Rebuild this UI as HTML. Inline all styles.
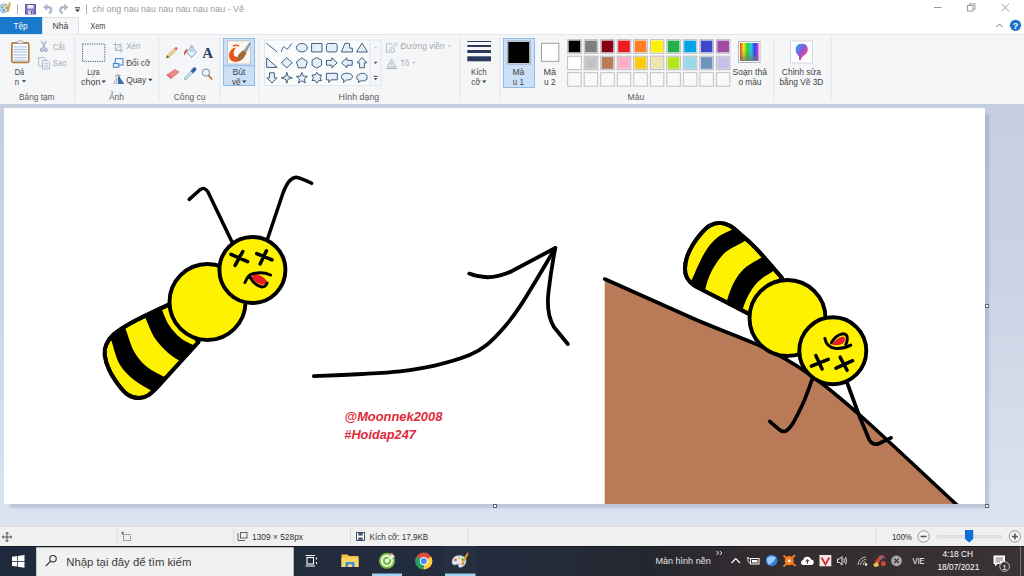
<!DOCTYPE html>
<html lang="vi">
<head>
<meta charset="utf-8">
<title>chi ong nau nau nau nau nau nau - Vẽ</title>
<style>
html,body{margin:0;padding:0;}
body{width:1024px;height:576px;overflow:hidden;position:relative;background:#fff;font-family:"Liberation Sans",sans-serif;font-size:9px;color:#3c3c3c;}
.abs{position:absolute;}
#titlebar{left:0;top:0;width:1024px;height:17px;background:#fff;}
#tabs{left:0;top:17px;width:1024px;height:17px;background:#fff;}
#ribbon{left:0;top:34px;width:1024px;height:70px;background:#f5f6f7;border-top:1px solid #e4e6e9;box-sizing:border-box;}
#work{left:0;top:104px;width:1024px;height:422px;background:linear-gradient(#c5cfdf,#c9d3e3 40%,#dce4f1);}
#canvas{left:4px;top:108px;width:981px;height:396px;background:#fff;box-shadow:5px 5px 2px -1px rgba(120,132,165,.3);}
#status{left:0;top:526px;width:1024px;height:20px;background:#f0f0f0;border-top:1px solid #dadbdc;box-sizing:border-box;}
#taskbar{left:0;top:546px;width:1024px;height:30px;background:linear-gradient(90deg,#1e2a3c 0,#242d3d 50%,#24272f 63%,#322c30 73%,#3a3233 100%);}
</style>
</head>
<body>
<div id="titlebar" class="abs"></div>
<div id="tabs" class="abs"></div>
<div id="ribbon" class="abs"></div>
<div id="work" class="abs"></div>
<div id="canvas" class="abs"></div>
<div id="status" class="abs"></div>
<div id="taskbar" class="abs"></div>
<svg id="ui" class="abs" style="left:0;top:0" width="1024" height="576" viewBox="0 0 1024 576" font-family="'Liberation Sans',sans-serif">
<g transform="translate(-1.5,-.5)"><path d="M1,9 Q1,4.5 6,4.5 Q10.5,5 10,9 Q9.5,12.5 6,13 Q1.5,13.5 1,9 Z" fill="#c4dcee" stroke="#7d9fc0" stroke-width=".8"/><circle cx="3.5" cy="8" r="1" fill="#5bb85b"/><circle cx="6" cy="6.5" r="1" fill="#f3c21b"/><circle cx="8.3" cy="8.5" r="1" fill="#47a447"/><circle cx="5" cy="10.8" r="1" fill="#3c7fd0"/><path d="M8.3,12 L10.5,2.8 L12.3,3.2 L10.3,12.5 Z" fill="#eaa13c"/></g>
<rect x="17" y="4.5" width="1" height="9.5" fill="#a9a9a9"/>
<g><rect x="25.5" y="4.5" width="10" height="9.5" fill="#8777bf" stroke="#6656a4" stroke-width="1"/><rect x="27.5" y="5" width="6" height="3.5" fill="#efeaf8"/><rect x="28" y="10.5" width="5" height="3.5" fill="#d8d0ea"/><rect x="31" y="11" width="1.4" height="2.5" fill="#4d3d84"/></g>
<g fill="#a9b6cb"><path d="M43,7.2 L47.3,3.7 V10.7 Z"/><path d="M47,7.2 H48.3 Q51.2,7.2 51.2,10 Q51.2,12.3 48.8,13.3" fill="none" stroke="#a9b6cb" stroke-width="2.3"/></g>
<g fill="#a9b6cb"><path d="M68.5,7.2 L64.2,3.7 V10.7 Z"/><path d="M64.5,7.2 H63.2 Q60.3,7.2 60.3,10 Q60.3,12.3 62.7,13.3" fill="none" stroke="#a9b6cb" stroke-width="2.3"/></g>
<rect x="75" y="7.3" width="5" height="1" fill="#333"/>
<path d="M75,9.5 h5 l-2.5,2.6 z" fill="#333"/>
<rect x="86" y="4.5" width="1" height="9.5" fill="#a9a9a9"/>
<text x="92.6" y="12.1" textLength="151.4" lengthAdjust="spacingAndGlyphs" font-size="8.9" fill="#9b9b9b">chi ong nau nau nau nau nau nau - Vẽ</text>
<g fill="none" stroke="#9a9a9a" stroke-width="1"><path d="M934,7.5 H941.5"/><rect x="967.5" y="5.5" width="5.5" height="5.5"/><path d="M969.5,5.5 V3.8 H975 V9.3 H973"/><path d="M1001.5,3.8 L1009,11.3 M1009,3.8 L1001.5,11.3"/></g>
<rect x="0" y="17" width="42" height="17" fill="#1979ca"/>
<text x="13.5" y="28.7" textLength="14" lengthAdjust="spacingAndGlyphs" font-size="8.9" fill="#fff">Tệp</text>
<path d="M42.5,34.5 V17.5 H78.5 V34.5" fill="#f5f6f7" stroke="#dcdfe3" stroke-width="1"/>
<text x="52.5" y="28.7" textLength="15.8" lengthAdjust="spacingAndGlyphs" font-size="8.9" fill="#3a3a3a">Nhà</text>
<text x="90.3" y="28.7" textLength="15" lengthAdjust="spacingAndGlyphs" font-size="8.9" fill="#3a3a3a">Xem</text>
<path d="M996.5,27 L999.5,24 L1002.5,27" fill="none" stroke="#7a7a7a" stroke-width="1"/>
<circle cx="1015.5" cy="25.3" r="5.6" fill="#1f74c9"/>
<text x="1015.5" y="28.5" font-size="9" font-weight="bold" fill="#fff" text-anchor="middle">?</text>
<rect x="74.2" y="37" width="1" height="64.5" fill="#e5e7ea"/>
<rect x="158.6" y="37" width="1" height="64.5" fill="#e5e7ea"/>
<rect x="219.3" y="37" width="1" height="64.5" fill="#e5e7ea"/>
<rect x="258.5" y="37" width="1" height="64.5" fill="#e5e7ea"/>
<rect x="459.8" y="37" width="1" height="64.5" fill="#e5e7ea"/>
<rect x="499.3" y="37" width="1" height="64.5" fill="#e5e7ea"/>
<rect x="773.2" y="37" width="1" height="64.5" fill="#e5e7ea"/>
<rect x="830.8" y="37" width="1" height="64.5" fill="#e5e7ea"/>
<text x="19" y="99.8" textLength="35.5" lengthAdjust="spacingAndGlyphs" font-size="8.6" fill="#5c5c5c">Bảng tạm</text>
<text x="109" y="99.8" textLength="15" lengthAdjust="spacingAndGlyphs" font-size="8.6" fill="#5c5c5c">Ảnh</text>
<text x="173.7" y="99.8" textLength="31.9" lengthAdjust="spacingAndGlyphs" font-size="8.6" fill="#5c5c5c">Công cụ</text>
<text x="338.5" y="99.8" textLength="40.8" lengthAdjust="spacingAndGlyphs" font-size="8.6" fill="#5c5c5c">Hình dạng</text>
<text x="627.6" y="99.8" textLength="16.6" lengthAdjust="spacingAndGlyphs" font-size="8.6" fill="#5c5c5c">Màu</text>
<g><rect x="11.8" y="42.8" width="17" height="19.6" rx="1.5" fill="#fdfdfd" stroke="#b17b42" stroke-width="1.7"/><path d="M13.5,46.8 H27 M13.5,49.5 H27 M13.5,52.2 H27 M13.5,54.9 H27 M13.5,57.6 H27 M13.5,60.2 H27" stroke="#b4cbe8" stroke-width="1.3"/><path d="M17,43.6 Q17,40.5 20.3,40.5 Q23.6,40.5 23.6,43.6 Z" fill="#e9ebee" stroke="#8d949d" stroke-width=".7"/></g>
<text x="14.7" y="74.8" textLength="9.5" lengthAdjust="spacingAndGlyphs" font-size="8.6" fill="#444">Dá</text>
<text x="14.7" y="84.6" textLength="4.3" lengthAdjust="spacingAndGlyphs" font-size="8.6" fill="#444">n</text>
<path d="M21.9,80.2 h4.2 l-2.1,2.4 z" fill="#333"/>
<g stroke="#9fb0c6" stroke-width="1.3" fill="none"><path d="M41.3,41 L45.5,48.8 M46.2,41 L42,48.8"/><circle cx="41.7" cy="50" r="1.4"/><circle cx="45.8" cy="50" r="1.4"/></g>
<text x="52.8" y="49.6" textLength="12" lengthAdjust="spacingAndGlyphs" font-size="8.6" fill="#a7abb2">Cắt</text>
<g fill="#eef2f7" stroke="#a9b7ca" stroke-width=".9"><path d="M38.5,57.5 H44 L46,59.5 V66 H38.5 Z"/><path d="M42.5,60.5 H47.5 L49.5,62.5 V69 H42.5 Z"/><path d="M44,63.5 H48 M44,65.3 H48 M44,67 H48" stroke-width=".6"/></g>
<text x="52.8" y="65.7" textLength="13.6" lengthAdjust="spacingAndGlyphs" font-size="8.6" fill="#a7abb2">Sao</text>
<rect x="82.6" y="44" width="22.2" height="17.4" fill="none" stroke="#4a5a70" stroke-width="1" stroke-dasharray="1.2 1.1"/>
<text x="87.2" y="74.9" textLength="12.5" lengthAdjust="spacingAndGlyphs" font-size="8.6" fill="#444">Lựa</text>
<text x="80.9" y="84.5" textLength="19.6" lengthAdjust="spacingAndGlyphs" font-size="8.6" fill="#444">chọn</text>
<path d="M101.7,80.6 h4.2 l-2.1,2.4 z" fill="#333"/>
<g stroke="#a9b7ca" stroke-width="1" fill="none"><path d="M113.5,44.5 H121 V52.5 M115.5,42.5 V50.5 H123"/><path d="M116,50 L120.5,45"/></g>
<text x="126.2" y="49.1" textLength="14.2" lengthAdjust="spacingAndGlyphs" font-size="8.6" fill="#a7abb2">Xén</text>
<g stroke="#4384c8" stroke-width="1" fill="#f2f7fd"><rect x="115.3" y="58.7" width="7.7" height="6.3"/><rect x="113.4" y="63.5" width="5.4" height="3.8" fill="#dfeaf8"/></g>
<text x="126.2" y="65.7" textLength="24.1" lengthAdjust="spacingAndGlyphs" font-size="8.6" fill="#444">Đổi cỡ</text>
<g><path d="M118.5,83.5 V76 L123.5,83.5 Z" fill="#3272ad" stroke="#285d90" stroke-width=".8"/><path d="M117,83.5 V77.5 L113.5,83.5 Z" fill="#dfe6ef" stroke="#9aa8bb" stroke-width=".7"/><path d="M115,76.5 Q117.5,74 120.5,75.5" fill="none" stroke="#5c6b80" stroke-width=".8"/></g>
<text x="126.2" y="82.6" textLength="20" lengthAdjust="spacingAndGlyphs" font-size="8.6" fill="#444">Quay</text>
<path d="M148.3,78.8 h4.2 l-2.1,2.4 z" fill="#333"/>
<g><path d="M166.3,58.2 L167.3,55.2 L174.3,48.3 L176.3,50.3 L169.3,57.2 Z" fill="#edcf8c" stroke="#c09a55" stroke-width=".5"/><path d="M174.3,48.3 L175.4,47.3 Q176.5,46.8 177.2,47.6 Q177.9,48.5 177.3,49.4 L176.3,50.3 Z" fill="#e0707a"/><path d="M166.3,58.2 L167.3,55.2 L169.3,57.2 Z" fill="#6a5a4a"/></g>
<g><path d="M186.5,52 L191.5,47 L196.5,52 L191.5,57.5 Z" fill="#eaf2fb" stroke="#6f8fb5" stroke-width=".9"/><path d="M188,52 L191.5,48.5 L195,52 Z" fill="#b9d4ef"/><path d="M187.5,48.5 Q183.5,50.5 184,55.5 Q185.8,53.5 186.5,52 Z" fill="#e0483e"/><path d="M190,46.3 Q192.5,44.8 193.5,47.5" fill="none" stroke="#6f8fb5" stroke-width=".8"/></g>
<text x="207.7" y="58.3" font-family="'Liberation Serif',serif" font-weight="bold" font-size="15" fill="#2c3e66" text-anchor="middle">A</text>
<g><path d="M166.8,75 L175,69.5 L179,72 L171,78.8 Z" fill="#f08a8f" stroke="#cf5e66" stroke-width=".6"/><path d="M166.8,75 L171,78.8 L171,76.8 L167,73.5 Z" fill="#d9646c"/></g>
<g><path d="M184.5,79.5 L185.3,77 L191,71.2 L192.8,73 L187,78.8 Z" fill="#cfe0f2" stroke="#6f8fb5" stroke-width=".6"/><path d="M190.5,70.8 L193.5,67.6 Q195,66.8 196,67.9 Q196.8,69 196,70.2 L193.2,73.5 Z" fill="#2d64a8"/></g>
<g><circle cx="205.9" cy="72.6" r="3.5" fill="#eef5fb" stroke="#8e9db1" stroke-width="1.1"/><path d="M208.7,75.6 L211.7,79" stroke="#b07a4a" stroke-width="1.8" stroke-linecap="round"/></g>
<rect x="223.5" y="38.5" width="31" height="47" fill="#cbe0f6" stroke="#8fbce8" stroke-width="1"/>
<rect x="224" y="65.2" width="30" height="1" fill="#8fbce8"/>
<rect x="227.5" y="40.8" width="23" height="23.2" fill="#fbf7f1" stroke="#b9bcc2" stroke-width="0.8"/>
<g><path d="M229,54.5 Q228.5,61.5 235.5,62 Q241,61.5 243,58 Q237.5,58.5 234.5,56 Q232,52.5 236,47.5 Q230,48.5 229,54.5 Z" fill="#e8541c"/><path d="M233,46.3 Q236.5,44.3 239,46.3" fill="none" stroke="#e8541c" stroke-width="1.4"/><path d="M237,58.5 Q238.5,52.5 244,50 L246.5,52.5 Q245,58.5 239.5,61 Z" fill="#a26a3a"/><path d="M244,50 L249.5,42 L251,43.2 L246.5,52.5 Z" fill="#8e9bb0"/></g>
<text x="232.5" y="75.2" textLength="13" lengthAdjust="spacingAndGlyphs" font-size="8.6" fill="#444">Bút</text>
<text x="231.9" y="84.8" textLength="8.6" lengthAdjust="spacingAndGlyphs" font-size="8.6" fill="#444">vẽ</text>
<path d="M242.2,80.6 h4.2 l-2.1,2.4 z" fill="#333"/>
<rect x="264.5" y="40" width="105.5" height="45.5" fill="#f9fbfd" stroke="#e1e6ee" stroke-width="1"/>
<rect x="370" y="40" width="11" height="45.5" fill="#f5f6f7" stroke="#e1e6ee" stroke-width="1"/>
<path transform="translate(271.9,47.7)" d="M-5.5,-4.5 L5.5,4.5" stroke="#42607f" stroke-width="1" fill="none"/>
<path transform="translate(286.8,47.7)" d="M-5.5,4 Q-3.5,-3 -1.5,0 Q0,3 2,0 Q4,-3.5 5.5,-4.5" stroke="#42607f" stroke-width="1" fill="none"/>
<ellipse cx="301.9" cy="47.7" rx="5.5" ry="4.2" stroke="#42607f" stroke-width="1" fill="#e6f0fa" stroke-linejoin="round"/>
<path transform="translate(316.8,47.7)" d="M-5.2,-4.2 H5.2 V4.2 H-5.2 Z" stroke="#42607f" stroke-width="1" fill="#e6f0fa" stroke-linejoin="round"/>
<rect x="326.4" y="43.5" width="10.8" height="8.4" rx="2" stroke="#42607f" stroke-width="1" fill="#e6f0fa" stroke-linejoin="round"/>
<path transform="translate(346.9,47.7)" d="M-5.5,4.3 L-2,-4.3 H2.5 L3,0.5 H5.5 V4.3 Z" stroke="#42607f" stroke-width="1" fill="#e6f0fa" stroke-linejoin="round"/>
<path transform="translate(362,47.7)" d="M0,-4.5 L5.5,4.3 H-5.5 Z" stroke="#42607f" stroke-width="1" fill="#e6f0fa" stroke-linejoin="round"/>
<path transform="translate(271.9,62.8)" d="M-5.3,-4.8 L5.3,4.6 H-5.3 Z" stroke="#42607f" stroke-width="1" fill="#e6f0fa" stroke-linejoin="round"/>
<path transform="translate(286.8,62.8)" d="M0,-5 L5.5,0 L0,5 L-5.5,0 Z" stroke="#42607f" stroke-width="1" fill="#e6f0fa" stroke-linejoin="round"/>
<path transform="translate(301.9,62.8)" d="M0,-5 L5.5,-1 L3.5,5 H-3.5 L-5.5,-1 Z" stroke="#42607f" stroke-width="1" fill="#e6f0fa" stroke-linejoin="round"/>
<path transform="translate(316.8,62.8)" d="M0,-5.3 L4.7,-2.6 V2.6 L0,5.3 L-4.7,2.6 V-2.6 Z" stroke="#42607f" stroke-width="1" fill="#e6f0fa" stroke-linejoin="round"/>
<path transform="translate(331.8,62.8)" d="M-5.3,-2.4 H0 V-5 L5.5,0 L0,5 V2.4 H-5.3 Z" stroke="#42607f" stroke-width="1" fill="#e6f0fa" stroke-linejoin="round"/>
<path transform="translate(346.9,62.8)" d="M5.3,-2.4 H0 V-5 L-5.5,0 L0,5 V2.4 H5.3 Z" stroke="#42607f" stroke-width="1" fill="#e6f0fa" stroke-linejoin="round"/>
<path transform="translate(362,62.8)" d="M-2.4,5 V0 H-5 L0,-5.3 L5,0 H2.4 V5 Z" stroke="#42607f" stroke-width="1" fill="#e6f0fa" stroke-linejoin="round"/>
<path transform="translate(271.9,77.8)" d="M-2.4,-5 V0 H-5 L0,5.3 L5,0 H2.4 V-5 Z" stroke="#42607f" stroke-width="1" fill="#e6f0fa" stroke-linejoin="round"/>
<path transform="translate(286.8,77.8)" d="M0,-5.5 L1.3,-1.3 L5.5,0 L1.3,1.3 L0,5.5 L-1.3,1.3 L-5.5,0 L-1.3,-1.3 Z" stroke="#42607f" stroke-width="1" fill="#e6f0fa" stroke-linejoin="round"/>
<path transform="translate(301.9,77.8)" d="M0,-5.3 L1.5,-1.6 L5.5,-1.4 L2.4,1.2 L3.5,5.2 L0,3 L-3.5,5.2 L-2.4,1.2 L-5.5,-1.4 L-1.5,-1.6 Z" stroke="#42607f" stroke-width="1" fill="#e6f0fa" stroke-linejoin="round"/>
<path transform="translate(316.8,77.8)" d="M0,-5.5 L1.7,-2.8 L4.8,-2.8 L3.3,0 L4.8,2.8 L1.7,2.8 L0,5.5 L-1.7,2.8 L-4.8,2.8 L-3.3,0 L-4.8,-2.8 L-1.7,-2.8 Z" stroke="#42607f" stroke-width="1" fill="#e6f0fa" stroke-linejoin="round"/>
<path transform="translate(331.8,77.8)" d="M-5.5,-4.5 H5.5 V2 H-1 L-3,4.8 V2 H-5.5 Z" stroke="#42607f" stroke-width="1" fill="#e6f0fa" stroke-linejoin="round"/>
<path transform="translate(346.9,77.8)" d="M-5.5,-1 Q-5.5,-4.5 0,-4.5 Q5.5,-4.5 5.5,-1 Q5.5,2.3 -0.5,2.3 L-3.5,4.8 L-3,2 Q-5.5,1.5 -5.5,-1 Z" stroke="#42607f" stroke-width="1" fill="#e6f0fa" stroke-linejoin="round"/>
<path transform="translate(362,77.8)" d="M-5.3,-0.5 Q-5.5,-3 -3,-3.2 Q-2,-5 0.3,-4.3 Q2.5,-5.2 3.7,-3.3 Q5.8,-2.5 5,-0.3 Q5.8,2 3.3,2.5 Q1.5,3.8 -0.5,2.8 L-3.8,4.8 L-3,2.5 Q-5.5,2 -5.3,-0.5 Z" stroke="#42607f" stroke-width="1" fill="#e6f0fa" stroke-linejoin="round"/>
<path d="M374.1,46.8 h3 l-1.5,1.8 z" fill="#b9bdc4"/>
<path d="M373.8,61.8 h3.6 l-1.8,2.2 z" fill="#444"/>
<rect x="373.6" y="75.8" width="4" height="1" fill="#444"/>
<path d="M373.8,78.1 h3.6 l-1.8,2.2 z" fill="#444"/>
<g><path d="M392,43.8 H386.5 V52.2 H394.5 V48.5" fill="none" stroke="#a9b7ca" stroke-width=".9"/><path d="M389.5,50.8 L390.3,48.3 L395.8,42.5 L397.5,44 L392,49.8 Z" fill="#e8ecf2" stroke="#a9b7ca" stroke-width=".7"/></g>
<text x="400.5" y="49" textLength="44.2" lengthAdjust="spacingAndGlyphs" font-size="8.6" fill="#a7abb2">Đường viền</text>
<path d="M448.1,45.3 h3.2 l-1.6,2 z" fill="#b9bdc4"/>
<g><path d="M387,67 L391.5,59 L396,67 Z" fill="#dfe7f1" stroke="#a9b7ca" stroke-width=".8"/><path d="M386,68.5 H397" stroke="#a9b7ca" stroke-width="1.2"/><circle cx="391.5" cy="63.5" r="1.6" fill="#c7d3e3"/></g>
<text x="400.5" y="65.5" textLength="8.5" lengthAdjust="spacingAndGlyphs" font-size="8.6" fill="#a7abb2">Tô</text>
<path d="M412.4,61.8 h3.2 l-1.6,2 z" fill="#b9bdc4"/>
<rect x="467.3" y="41" width="23.7" height="1" fill="#2b3a5c"/>
<rect x="467.3" y="45" width="23.7" height="2" fill="#2b3a5c"/>
<rect x="467.3" y="50" width="23.7" height="3" fill="#2b3a5c"/>
<rect x="467.3" y="56.3" width="23.7" height="5" fill="#2b3a5c"/>
<text x="471" y="75.2" textLength="15.5" lengthAdjust="spacingAndGlyphs" font-size="8.6" fill="#444">Kích</text>
<text x="471.3" y="84.8" textLength="9.2" lengthAdjust="spacingAndGlyphs" font-size="8.6" fill="#444">cỡ</text>
<path d="M482.2,80.6 h4.2 l-2.1,2.4 z" fill="#333"/>
<rect x="503.5" y="38.5" width="31" height="49" fill="#cbe0f6" stroke="#8fbce8" stroke-width="1"/>
<rect x="507.3" y="41" width="22.9" height="23" fill="#dfe9f5" stroke="#8e9aab" stroke-width="0.8"/>
<rect x="508.3" y="42" width="20.9" height="21" fill="#000"/>
<text x="512.4" y="74.5" textLength="11.9" lengthAdjust="spacingAndGlyphs" font-size="8.6" fill="#444">Mà</text>
<text x="512.8" y="84.9" textLength="11" lengthAdjust="spacingAndGlyphs" font-size="8.6" fill="#444">u 1</text>
<rect x="541.5" y="43.3" width="17.3" height="18" fill="#fff" stroke="#9a9fa6" stroke-width="1"/>
<text x="543.5" y="74.5" textLength="12.5" lengthAdjust="spacingAndGlyphs" font-size="8.6" fill="#444">Mà</text>
<text x="544" y="84.9" textLength="11.5" lengthAdjust="spacingAndGlyphs" font-size="8.6" fill="#444">u 2</text>
<rect x="567.7" y="39.7" width="13.5" height="13.5" fill="#fff" stroke="#aeb2b8" stroke-width="0.9"/>
<rect x="568.6" y="40.6" width="11.7" height="11.7" fill="#000000"/>
<rect x="584.22" y="39.7" width="13.5" height="13.5" fill="#fff" stroke="#aeb2b8" stroke-width="0.9"/>
<rect x="585.12" y="40.6" width="11.7" height="11.7" fill="#7f7f7f"/>
<rect x="600.74" y="39.7" width="13.5" height="13.5" fill="#fff" stroke="#aeb2b8" stroke-width="0.9"/>
<rect x="601.64" y="40.6" width="11.7" height="11.7" fill="#880015"/>
<rect x="617.26" y="39.7" width="13.5" height="13.5" fill="#fff" stroke="#aeb2b8" stroke-width="0.9"/>
<rect x="618.16" y="40.6" width="11.7" height="11.7" fill="#ed1c24"/>
<rect x="633.78" y="39.7" width="13.5" height="13.5" fill="#fff" stroke="#aeb2b8" stroke-width="0.9"/>
<rect x="634.68" y="40.6" width="11.7" height="11.7" fill="#ff7f27"/>
<rect x="650.3" y="39.7" width="13.5" height="13.5" fill="#fff" stroke="#aeb2b8" stroke-width="0.9"/>
<rect x="651.2" y="40.6" width="11.7" height="11.7" fill="#fff200"/>
<rect x="666.82" y="39.7" width="13.5" height="13.5" fill="#fff" stroke="#aeb2b8" stroke-width="0.9"/>
<rect x="667.72" y="40.6" width="11.7" height="11.7" fill="#22b14c"/>
<rect x="683.34" y="39.7" width="13.5" height="13.5" fill="#fff" stroke="#aeb2b8" stroke-width="0.9"/>
<rect x="684.24" y="40.6" width="11.7" height="11.7" fill="#00a2e8"/>
<rect x="699.86" y="39.7" width="13.5" height="13.5" fill="#fff" stroke="#aeb2b8" stroke-width="0.9"/>
<rect x="700.76" y="40.6" width="11.7" height="11.7" fill="#3f48cc"/>
<rect x="716.38" y="39.7" width="13.5" height="13.5" fill="#fff" stroke="#aeb2b8" stroke-width="0.9"/>
<rect x="717.28" y="40.6" width="11.7" height="11.7" fill="#a349a4"/>
<rect x="567.7" y="56.2" width="13.5" height="13.5" fill="#fff" stroke="#aeb2b8" stroke-width="0.9"/>
<rect x="568.6" y="57.1" width="11.7" height="11.7" fill="#ffffff"/>
<rect x="584.22" y="56.2" width="13.5" height="13.5" fill="#fff" stroke="#aeb2b8" stroke-width="0.9"/>
<rect x="585.12" y="57.1" width="11.7" height="11.7" fill="#c3c3c3"/>
<rect x="600.74" y="56.2" width="13.5" height="13.5" fill="#fff" stroke="#aeb2b8" stroke-width="0.9"/>
<rect x="601.64" y="57.1" width="11.7" height="11.7" fill="#b97a57"/>
<rect x="617.26" y="56.2" width="13.5" height="13.5" fill="#fff" stroke="#aeb2b8" stroke-width="0.9"/>
<rect x="618.16" y="57.1" width="11.7" height="11.7" fill="#ffaec9"/>
<rect x="633.78" y="56.2" width="13.5" height="13.5" fill="#fff" stroke="#aeb2b8" stroke-width="0.9"/>
<rect x="634.68" y="57.1" width="11.7" height="11.7" fill="#ffc90e"/>
<rect x="650.3" y="56.2" width="13.5" height="13.5" fill="#fff" stroke="#aeb2b8" stroke-width="0.9"/>
<rect x="651.2" y="57.1" width="11.7" height="11.7" fill="#efe4b0"/>
<rect x="666.82" y="56.2" width="13.5" height="13.5" fill="#fff" stroke="#aeb2b8" stroke-width="0.9"/>
<rect x="667.72" y="57.1" width="11.7" height="11.7" fill="#b5e61d"/>
<rect x="683.34" y="56.2" width="13.5" height="13.5" fill="#fff" stroke="#aeb2b8" stroke-width="0.9"/>
<rect x="684.24" y="57.1" width="11.7" height="11.7" fill="#99d9ea"/>
<rect x="699.86" y="56.2" width="13.5" height="13.5" fill="#fff" stroke="#aeb2b8" stroke-width="0.9"/>
<rect x="700.76" y="57.1" width="11.7" height="11.7" fill="#7092be"/>
<rect x="716.38" y="56.2" width="13.5" height="13.5" fill="#fff" stroke="#aeb2b8" stroke-width="0.9"/>
<rect x="717.28" y="57.1" width="11.7" height="11.7" fill="#c8bfe7"/>
<rect x="567.7" y="72.7" width="13.5" height="13.5" fill="#f9f9fa" stroke="#b9bcc1" stroke-width="0.9"/>
<rect x="584.22" y="72.7" width="13.5" height="13.5" fill="#f9f9fa" stroke="#b9bcc1" stroke-width="0.9"/>
<rect x="600.74" y="72.7" width="13.5" height="13.5" fill="#f9f9fa" stroke="#b9bcc1" stroke-width="0.9"/>
<rect x="617.26" y="72.7" width="13.5" height="13.5" fill="#f9f9fa" stroke="#b9bcc1" stroke-width="0.9"/>
<rect x="633.78" y="72.7" width="13.5" height="13.5" fill="#f9f9fa" stroke="#b9bcc1" stroke-width="0.9"/>
<rect x="650.3" y="72.7" width="13.5" height="13.5" fill="#f9f9fa" stroke="#b9bcc1" stroke-width="0.9"/>
<rect x="666.82" y="72.7" width="13.5" height="13.5" fill="#f9f9fa" stroke="#b9bcc1" stroke-width="0.9"/>
<rect x="683.34" y="72.7" width="13.5" height="13.5" fill="#f9f9fa" stroke="#b9bcc1" stroke-width="0.9"/>
<rect x="699.86" y="72.7" width="13.5" height="13.5" fill="#f9f9fa" stroke="#b9bcc1" stroke-width="0.9"/>
<rect x="716.38" y="72.7" width="13.5" height="13.5" fill="#f9f9fa" stroke="#b9bcc1" stroke-width="0.9"/>
<defs><linearGradient id="rb" x1="0" x2="1" y1="0" y2="0"><stop offset="0" stop-color="#f03020"/><stop offset=".2" stop-color="#f4ee10"/><stop offset=".4" stop-color="#20d030"/><stop offset=".6" stop-color="#18d0e8"/><stop offset=".8" stop-color="#2838f0"/><stop offset="1" stop-color="#e030e0"/></linearGradient><linearGradient id="rbg" x1="0" x2="0" y1="0" y2="1"><stop offset="0" stop-color="#fff" stop-opacity="0"/><stop offset=".55" stop-color="#777" stop-opacity=".15"/><stop offset="1" stop-color="#777" stop-opacity=".85"/></linearGradient></defs>
<rect x="738.5" y="41.5" width="21.5" height="21" fill="#fff" stroke="#b5b8be" stroke-width="1"/>
<rect x="740" y="43" width="18.5" height="18" fill="url(#rb)"/>
<rect x="740" y="43" width="18.5" height="18" fill="url(#rbg)"/>
<text x="732.5" y="75" textLength="34.5" lengthAdjust="spacingAndGlyphs" font-size="8.6" fill="#444">Soạn thả</text>
<text x="738.4" y="84.9" textLength="23.1" lengthAdjust="spacingAndGlyphs" font-size="8.6" fill="#444">o màu</text>
<defs><linearGradient id="p3" x1="0" x2="1" y1="0" y2="1"><stop offset="0" stop-color="#18b6f2"/><stop offset=".45" stop-color="#8b55e0"/><stop offset=".75" stop-color="#f0468a"/><stop offset="1" stop-color="#ffb52e"/></linearGradient></defs>
<rect x="790.5" y="41" width="22" height="22" fill="#fff" stroke="#d5d8dd" stroke-width="1"/>
<path d="M801.8,43.8 Q807.8,43.8 807.8,49.6 Q807.8,53.5 803.5,55.8 Q801.5,57.5 800.3,60.8 Q799,60.5 799,58.5 Q799.5,56.5 798,55 Q795.6,53 795.6,49.6 Q795.6,43.8 801.8,43.8 Z" fill="url(#p3)"/>
<text x="781.8" y="75" textLength="39.2" lengthAdjust="spacingAndGlyphs" font-size="8.6" fill="#444">Chỉnh sửa</text>
<text x="779.4" y="84.9" textLength="43.9" lengthAdjust="spacingAndGlyphs" font-size="8.6" fill="#444">bằng Vẽ 3D</text>
<rect x="116.5" y="528.5" width="1" height="15.5" fill="#dcdcdc"/>
<rect x="233.3" y="528.5" width="1" height="15.5" fill="#dcdcdc"/>
<rect x="350" y="528.5" width="1" height="15.5" fill="#dcdcdc"/>
<rect x="467.5" y="528.5" width="1" height="15.5" fill="#dcdcdc"/>
<rect x="875.5" y="528.5" width="1" height="15.5" fill="#dcdcdc"/>
<path d="M7,532.5 V541.5 M2.5,537 H11.5 M5.5,534 L7,532.3 L8.5,534 M5.5,540 L7,541.7 L8.5,540 M4,535.5 L2.3,537 L4,538.5 M10,535.5 L11.7,537 L10,538.5" fill="none" stroke="#444" stroke-width=".9"/>
<g fill="none" stroke="#555" stroke-width=".9"><rect x="123.5" y="534.5" width="7" height="6" stroke-dasharray="1.2 .9"/><path d="M121.3,533 H124 M122.6,531.8 V534.5"/></g>
<g fill="none" stroke="#555" stroke-width=".9"><rect x="240.5" y="532.5" width="6.5" height="5.5"/><path d="M238,533 V540.5 H245"/></g>
<text x="252" y="540" textLength="51" lengthAdjust="spacingAndGlyphs" font-size="8.4" fill="#333">1309 × 528px</text>
<g><rect x="356.5" y="532.5" width="8" height="8" fill="#fff" stroke="#44546a" stroke-width="1"/><rect x="358.3" y="533" width="4.4" height="2.6" fill="#44546a"/><rect x="358.3" y="537.5" width="4.4" height="3" fill="#44546a"/></g>
<text x="369.5" y="540" textLength="58.7" lengthAdjust="spacingAndGlyphs" font-size="8.4" fill="#333">Kích cỡ: 17,9KB</text>
<text x="892" y="539.7" textLength="20" lengthAdjust="spacingAndGlyphs" font-size="8.4" fill="#333">100%</text>
<circle cx="923.6" cy="536.5" r="5.7" fill="#f6f6f6" stroke="#8b8b8b" stroke-width=".9"/>
<rect x="920.6" y="535.7" width="6" height="1.6" fill="#555"/>
<rect x="937.7" y="535.5" width="63.3" height="2.3" fill="#e4e4e4" stroke="#d2d2d2" stroke-width="0.6"/>
<path d="M965,530 H973.2 V539 L969.1,542.5 L965,539 Z" fill="#0f70d2"/>
<circle cx="1014.9" cy="536.5" r="5.7" fill="#f6f6f6" stroke="#8b8b8b" stroke-width=".9"/>
<rect x="1011.9" y="535.7" width="6" height="1.6" fill="#555"/>
<rect x="1014.1" y="533.5" width="1.6" height="6" fill="#555"/>
<g fill="#fff"><path d="M12,556.8 L17.2,556.1 V561 H12 Z M17.9,556 L24.5,555 V561 H17.9 Z M12,561.7 H17.2 V566.6 L12,565.9 Z M17.9,561.7 H24.5 V567.7 L17.9,566.7 Z"/></g>
<rect x="0" y="546" width="1024" height="1" fill="#1a1c22"/>
<rect x="36.2" y="547.3" width="257.5" height="28.7" fill="#f1f1f1"/>
<g fill="none" stroke="#333" stroke-width="1.1"><circle cx="53" cy="558.7" r="3.2"/><path d="M50.7,561 L45.8,566.2"/></g>
<text x="66.3" y="566.2" textLength="125" lengthAdjust="spacingAndGlyphs" font-size="11.3" fill="#3b3b3b">Nhập tại đây để tìm kiếm</text>
<g fill="none" stroke="#fff" stroke-width="1.1"><rect x="307" y="557.5" width="6.5" height="6.5"/><path d="M305.5,555.5 H315 M305.5,566 H315 M316.5,557.5 V559.5 M316.5,562 V564"/></g>
<g><path d="M341.5,554.5 H347.5 L349,556 H358.5 V567 H341.5 Z" fill="#f6c445"/><path d="M341.5,558 H358.5 V567 H341.5 Z" fill="#fbd76b"/><path d="M345.5,562 H354.5 V567 H345.5 Z" fill="#3d8fd8"/><rect x="348" y="564.3" width="4" height="2.7" fill="#fbd76b"/></g>
<g><circle cx="387" cy="560.8" r="8" fill="#78c043"/><circle cx="387" cy="560.8" r="5.2" fill="none" stroke="#fff" stroke-width="1.6"/><circle cx="387" cy="560.8" r="2" fill="#fff"/><path d="M387,560.8 L391,553 L395,556.5 Z" fill="#eef6e6"/><path d="M389.5,556 L393,553.2" stroke="#e44" stroke-width=".8"/></g>
<rect x="372" y="573.5" width="30" height="2.5" fill="#a0d3f4"/>
<g><circle cx="423.8" cy="561" r="8.5" fill="#dd4b3e"/><path d="M423.8,561 L416.44,565.25 A8.5,8.5 0 0 0 423.8,569.5 Z" fill="#1da462"/><path d="M416.44,565.25 A8.5,8.5 0 0 1 416.44,556.75 L423.8,561 Z" fill="#1da462"/><path d="M423.8,561 L423.8,569.5 A8.5,8.5 0 0 0 431.16,556.75 Z" fill="#ffcd40"/><circle cx="423.8" cy="561" r="4" fill="#fff"/><circle cx="423.8" cy="561" r="3.1" fill="#4c8bf5"/></g>
<rect x="444.5" y="546" width="31.5" height="30" fill="#252f3d"/>
<g><path d="M452,562 Q452,556 459,555.5 Q466.5,556 466,561.5 Q465.5,566.5 460,567.5 Q458,567.5 458.5,565.5 Q459,563.5 456.5,564.5 Q452,566 452,562 Z" fill="#dfe9f3" stroke="#8fa3bb" stroke-width=".6"/><circle cx="455.5" cy="560" r="1.3" fill="#e8554d"/><circle cx="459" cy="558" r="1.3" fill="#f3c21b"/><circle cx="462.7" cy="559.5" r="1.3" fill="#47a447"/><circle cx="463" cy="563.5" r="1.3" fill="#3c7fd0"/><path d="M460.5,564.5 L466.5,553.5 L468.2,554.5 L462.5,565.5 Z" fill="#e9a23b"/><path d="M466.5,553.5 L467.5,552 L469,553 L468.2,554.5 Z" fill="#e8554d"/></g>
<rect x="445" y="573.5" width="30.5" height="2.5" fill="#a0d3f4"/>
<text x="655.5" y="563.8" textLength="55.2" lengthAdjust="spacingAndGlyphs" font-size="9.3" fill="#e6e6e6">Màn hình nền</text>
<path d="M716.5,551 L718.5,553 L716.5,555 M719.8,551 L721.8,553 L719.8,555" fill="none" stroke="#fff" stroke-width=".9"/>
<path d="M731.5,563 L735.7,558.5 L740,563" fill="none" stroke="#fff" stroke-width="1.2"/>
<g><rect x="750.5" y="558.5" width="8.5" height="5.5" fill="none" stroke="#fff" stroke-width="1"/><rect x="752" y="560" width="5.5" height="2.5" fill="#fff"/><path d="M748,557 V561 M746.8,558 H749.5 M748,561 Q748,563 750,563" stroke="#fff" stroke-width=".8" fill="none"/></g>
<g><circle cx="771.6" cy="560.5" r="5.8" fill="#2f7fd6"/><path d="M767,558 Q771,555 776,557.5 Q774,562 769,565 Q766.5,562 767,558 Z" fill="#9ccaf5"/></g>
<g><circle cx="789.2" cy="560.7" r="4.6" fill="#f47b20"/><path d="M784,556 L787,558.5 M794.5,555.5 L791.5,558.5 M784,566 L787,563.3 M795,565.5 L792,563" stroke="#f47b20" stroke-width="1.8" stroke-linecap="round"/><circle cx="789.2" cy="560.7" r="1.5" fill="#fff"/></g>
<g fill="#fff"><path d="M803.5,565 Q801,565 801,562.5 Q801,560.3 803.3,560 Q803.8,556.8 807.3,556.8 Q810.3,556.8 811,559.5 Q813.8,559.8 813.8,562.3 Q813.8,565 811,565 Z"/></g><path d="M807.4,563.7 V559.8 M805.5,561.5 L807.4,559.6 L809.3,561.5" stroke="#2a2a30" stroke-width="1" fill="none"/>
<rect x="819.5" y="555" width="11.8" height="11.3" fill="#f4e9ea"/>
<path d="M821.5,557.5 L825.4,564.5 L829.3,557.5" fill="none" stroke="#d2232a" stroke-width="1.7"/>
<g fill="none" stroke="#fff" stroke-width=".9"><path d="M837.5,559 H839.5 L842,556.5 V565 L839.5,562.5 H837.5 Z"/><path d="M843.8,558.5 Q845,560.7 843.8,563 M845.5,557 Q847.5,560.7 845.5,564.5"/></g>
<g fill="none" stroke="#b9b9b9" stroke-width="1"><path d="M858,565 A8,8 0 0 1 866,557"/><path d="M860.5,565 A5.5,5.5 0 0 1 866,559.5"/><path d="M863,565 A3,3 0 0 1 866,562"/></g><circle cx="866" cy="564.5" r="1.2" fill="#fff"/>
<g><path d="M874,563 L879,556.5 Q882,554 884.5,556.5 L885.5,559 Q883,557 880.5,559.5 L877.5,566 Z" fill="#d8423c"/><path d="M873,564.5 L877.5,562 L879,566 L875,567 Z" fill="#f0c54a"/><circle cx="883.3" cy="563.5" r="2.5" fill="#d8423c"/><path d="M880,556 Q882,557.5 881,560" stroke="#4a7fd0" stroke-width="1.2" fill="none"/></g>
<circle cx="896.5" cy="560.8" r="5.4" fill="#a9a9a9"/><path d="M894.3,558.6 L898.7,563 M898.7,558.6 L894.3,563" stroke="#3a3435" stroke-width="1.3"/>
<text x="912.5" y="563.6" textLength="12" lengthAdjust="spacingAndGlyphs" font-size="8.8" fill="#fff">VIE</text>
<text x="942.5" y="556.8" textLength="30.5" lengthAdjust="spacingAndGlyphs" font-size="8.6" fill="#fff">4:18 CH</text>
<text x="937.4" y="570.4" textLength="41.9" lengthAdjust="spacingAndGlyphs" font-size="8.6" fill="#fff">18/07/2021</text>
<g><path d="M993.5,555.5 H1005 V564 H997.5 L995,566.5 V564 H993.5 Z" fill="#fff"/><path d="M995.5,558 H1003 M995.5,560 H1003 M995.5,562 H1000" stroke="#3a3435" stroke-width=".7"/><circle cx="1004.6" cy="566.5" r="4.8" fill="#3a3435" stroke="#cfcfcf" stroke-width=".9"/></g>
<text x="1004.6" y="569.5" font-size="8" fill="#fff" text-anchor="middle">1</text>
<rect x="1020" y="546" width="0.8" height="30" fill="#8a8585"/>
</svg>
<svg id="art" class="abs" style="left:0;top:0" width="1024" height="576" viewBox="0 0 1024 576">
<defs>
<clipPath id="cv"><rect x="4" y="108" width="981" height="396"/></clipPath>
<clipPath id="ab1"><path id="ab1p" d="M169,304.5 C162.9,307.4 141.7,317.2 132.4,322.2 C123.2,327.2 117.9,330.8 113.5,334.6 C109.1,338.4 107.7,341.4 106.2,344.8 C104.7,348.2 104.2,350.9 104.7,355 C105.2,359.1 106.9,364.8 109.1,369.6 C111.3,374.5 114.9,380 117.9,384.1 C120.9,388.2 123.9,392 127.3,394.3 C130.7,396.6 134.8,397.9 138.3,398 C141.8,398.1 144.9,397.4 148.5,395.1 C152.1,392.8 151.8,393 160.1,384.1 C168.4,375.2 192.1,349 198.5,342 Z"/></clipPath>
<clipPath id="ab2"><path d="M782,278 C777.7,273.1 763,255.8 756,248.4 C749,241.1 744.5,237.7 740.1,233.9 C735.8,230.1 733.3,227.6 729.9,225.8 C726.5,224 723.1,222.9 719.7,222.9 C716.3,222.9 712.6,224 709.5,225.8 C706.4,227.6 703.6,230.7 700.8,233.9 C698,237.1 695.1,240.9 692.8,244.8 C690.5,248.7 688.2,253.2 686.9,257.2 C685.6,261.2 685,265.5 685,268.9 C685,272.3 685.5,274.9 686.9,277.6 C688.3,280.3 690.5,282.6 693.5,284.9 C696.5,287.2 696,286.5 705.2,291.4 C714.5,296.2 741.7,310.2 749,314 Z"/></clipPath>
</defs>
<g clip-path="url(#cv)" fill="none" stroke="#000" stroke-width="3.9" stroke-linecap="round" stroke-linejoin="round">
<!-- hill -->
<path d="M604.7,279 C640,295 670,308 693.75,318.75 C715,328 737,336 756.25,344.2 C775,352.5 793,363 808.6,373.7 C825,385 845,402 862,417 C880,433 915,466 958,506 L604.7,506 Z" fill="#b97a57" stroke="none"/>
<path d="M604.7,279 C640,295 670,308 693.75,318.75 C715,328 737,336 756.25,344.2 C775,352.5 793,363 808.6,373.7 C825,385 845,402 862,417 C880,433 915,466 958,506" stroke-width="3.6"/>
<!-- left bee -->
<path d="M189.2,199.4 L200,189.7 Q204.5,186.3 208,192 L232,242" stroke-width="3.5"/>
<path d="M267.5,239 L283,193 Q288.5,178 296,177.3 Q302,178.5 311.7,183.3" stroke-width="3.5"/>
<path d="M169,304.5 C162.9,307.4 141.7,317.2 132.4,322.2 C123.2,327.2 117.9,330.8 113.5,334.6 C109.1,338.4 107.7,341.4 106.2,344.8 C104.7,348.2 104.2,350.9 104.7,355 C105.2,359.1 106.9,364.8 109.1,369.6 C111.3,374.5 114.9,380 117.9,384.1 C120.9,388.2 123.9,392 127.3,394.3 C130.7,396.6 134.8,397.9 138.3,398 C141.8,398.1 144.9,397.4 148.5,395.1 C152.1,392.8 151.8,393 160.1,384.1 C168.4,375.2 192.1,349 198.5,342 Z" fill="#fff200"/>
<g clip-path="url(#ab1)" fill="#000" stroke="none">
<path d="M143.3,313.4 C143.7,314.3 143.9,314.6 145.8,318.8 C147.7,323 151.2,332.7 154.9,338.3 C158.6,343.9 163.6,348.8 167.9,352.7 C172.2,356.6 177.9,359.7 180.9,361.8 C183.9,363.9 185,364.7 185.8,365.2 L200.6,349 C199.7,348.5 198.6,347.9 195.3,346.1 C192,344.3 185.2,341.8 180.9,338.3 C176.6,334.8 172.4,330.3 169.2,325.3 C165.9,320.3 163.1,312.1 161.4,308.4 C159.7,304.7 159.3,303.9 158.9,303 Z"/>
<path d="M109.9,336.5 C110.2,337.5 110.3,337.6 111.9,342.2 C113.5,346.8 116,358.1 119.7,364.4 C123.4,370.7 128.9,375.7 134.1,380 C139.3,384.3 147.3,388.1 151,390.4 C154.7,392.7 155.3,393 156.1,393.5 L170.5,380.4 C169.6,379.9 169.2,379.6 165.3,377.4 C161.4,375.2 152.3,371.3 147.1,367 C141.9,362.7 137.6,357.5 134.1,351.4 C130.6,345.3 127.9,334.9 126.2,330.5 C124.6,326.1 124.5,325.8 124.1,324.9 Z"/>
</g>
<path d="M169,304.5 C162.9,307.4 141.7,317.2 132.4,322.2 C123.2,327.2 117.9,330.8 113.5,334.6 C109.1,338.4 107.7,341.4 106.2,344.8 C104.7,348.2 104.2,350.9 104.7,355 C105.2,359.1 106.9,364.8 109.1,369.6 C111.3,374.5 114.9,380 117.9,384.1 C120.9,388.2 123.9,392 127.3,394.3 C130.7,396.6 134.8,397.9 138.3,398 C141.8,398.1 144.9,397.4 148.5,395.1 C152.1,392.8 151.8,393 160.1,384.1 C168.4,375.2 192.1,349 198.5,342" />
<circle cx="207.5" cy="302" r="38" fill="#fff200"/>
<circle cx="252.4" cy="270" r="33" fill="#fff200"/>
<path d="M231,254.3 L247.6,261.7 M242.8,251.5 L235.1,265.4 M256.7,253.6 L272,259.9 M266.4,250.8 L260.1,264" stroke-width="3.5"/>
<ellipse cx="259.5" cy="279.5" rx="8" ry="4" transform="rotate(28 259.5 279.5)" fill="#ed1c24" stroke="none"/>
<path d="M245,282.5 Q248,275 252,274 Q262,271 270.5,275 M250,277 Q254,285 262,287 Q266,287 267,283" stroke-width="3"/>
<!-- arrow -->
<path d="M313.8,376.2 C321.9,375.8 348.1,374.8 362.5,374 C376.9,373.2 388,372.7 400,371.3 C412,369.9 423.1,368.3 434.7,365.6 C446.3,362.9 460.8,358.6 469.5,355.1 C478.2,351.6 481.1,349.3 486.9,344.7 C492.7,340.1 498.4,334.1 504.2,327.3 C510,320.5 513.1,317.1 521.6,303.9 C530.1,290.7 549.7,257.3 555.3,248" stroke-width="3.8"/>
<path d="M469.2,273.6 Q490,282 512,271 L555.3,248 Q551,270 548.5,292 Q546,314 553.9,327 L567.8,344" stroke-width="3.8"/>
<!-- right bee -->
<path d="M812,379.5 Q806.5,396 802.4,404.7 Q797,416 794,421.4 Q790,428.5 786,431 Q782.5,432.5 779,429.3 L769.7,421.4" stroke-width="3.7"/>
<path d="M846.3,380.5 L859.5,416.5 L869.2,439.6 Q873,446 879,443.5 L891,437.9" stroke-width="3.7"/>
<path d="M782,278 C777.7,273.1 763,255.8 756,248.4 C749,241.1 744.5,237.7 740.1,233.9 C735.8,230.1 733.3,227.6 729.9,225.8 C726.5,224 723.1,222.9 719.7,222.9 C716.3,222.9 712.6,224 709.5,225.8 C706.4,227.6 703.6,230.7 700.8,233.9 C698,237.1 695.1,240.9 692.8,244.8 C690.5,248.7 688.2,253.2 686.9,257.2 C685.6,261.2 685,265.5 685,268.9 C685,272.3 685.5,274.9 686.9,277.6 C688.3,280.3 690.5,282.6 693.5,284.9 C696.5,287.2 696,286.5 705.2,291.4 C714.5,296.2 741.7,310.2 749,314 Z" fill="#fff200"/>
<g clip-path="url(#ab2)" fill="#000" stroke="none">
<path d="M736,227.4 C735.1,227.9 733.6,228.6 730.7,230.2 C727.8,231.8 722.2,233.8 718.3,236.8 C714.4,239.8 710.5,244 707.3,248.4 C704.1,252.8 701.6,258.4 699.3,263 C697,267.6 694.9,273 693.5,276.1 C692.1,279.2 691.5,280.7 691.1,281.6 L703.4,295 C703.7,294.1 704.3,292.2 705.2,289.3 C706.1,286.4 707.2,281.5 708.8,277.6 C710.4,273.7 711.8,270.1 714.6,265.9 C717.4,261.6 720.9,256.1 725.6,252.1 C730.4,248.1 739.3,244.1 743.1,241.9 C746.9,239.7 747.4,239.4 748.3,238.9 Z"/>
<path d="M764.2,255.8 C763.4,256.3 762,257.1 759.1,258.9 C756.2,260.7 750.4,263.5 746.7,266.5 C743,269.5 739.8,273 737.1,277 C734.4,281 732.1,286.2 730.4,290.4 C728.6,294.5 727.5,299 726.6,301.9 C725.7,304.8 725,306.6 724.7,307.6 L739.9,317 C740.2,316.1 740.9,314.1 741.9,311.4 C742.9,308.7 744,304.7 745.7,300.9 C747.5,297.1 750,292 752.4,288.5 C754.8,285 756.8,282.6 760,279.9 C763.2,277.2 768.7,274.1 771.5,272.3 C774.3,270.5 775.7,269.5 776.5,269 Z"/>
</g>
<path d="M782,278 C777.7,273.1 763,255.8 756,248.4 C749,241.1 744.5,237.7 740.1,233.9 C735.8,230.1 733.3,227.6 729.9,225.8 C726.5,224 723.1,222.9 719.7,222.9 C716.3,222.9 712.6,224 709.5,225.8 C706.4,227.6 703.6,230.7 700.8,233.9 C698,237.1 695.1,240.9 692.8,244.8 C690.5,248.7 688.2,253.2 686.9,257.2 C685.6,261.2 685,265.5 685,268.9 C685,272.3 685.5,274.9 686.9,277.6 C688.3,280.3 690.5,282.6 693.5,284.9 C696.5,287.2 696,286.5 705.2,291.4 C714.5,296.2 741.7,310.2 749,314"/>
<circle cx="787.5" cy="318" r="38" fill="#fff200"/>
<circle cx="832.8" cy="350.7" r="33.5" fill="#fff200"/>
<path d="M811.3,366.2 L828.3,359.4 M815.8,355.5 L822.1,368.9 M836,368.2 L852.6,360.7 M840.1,357.2 L847.1,370.3" stroke-width="3.5"/>
<path d="M832.2,344.8 Q836,337.7 842.9,336.5 Q846,337 844.5,341.4 Q840.8,346.5 832.2,344.8 Z" fill="#ed1c24" stroke="none"/>
<path d="M824.9,338.4 Q826.3,346.7 835.3,348.4 Q843.6,349 850.8,345.1 M831.4,342.8 Q835.3,335.6 842.2,333.9 Q847.8,333.5 847.3,339.1 Q847,342.6 845.7,344.4" stroke-width="3"/>
</g>
<!-- watermark text -->
<g fill="#e02a3a" font-family="'Liberation Sans',sans-serif" font-weight="bold" font-style="italic" font-size="12.5">
<text x="344.6" y="421" textLength="97.7" lengthAdjust="spacingAndGlyphs">@Moonnek2008</text>
<text x="344.3" y="438.6" textLength="71.6" lengthAdjust="spacingAndGlyphs">#Hoidap247</text>
</g>
<!-- canvas handles -->
<g fill="#fff" stroke="#5b6373" stroke-width="1">
<rect x="985.5" y="304.5" width="3" height="3"/>
<rect x="985.5" y="504.5" width="3" height="3"/>
<rect x="493.5" y="504.5" width="3" height="3"/>
</g>
</svg>
</body>
</html>
